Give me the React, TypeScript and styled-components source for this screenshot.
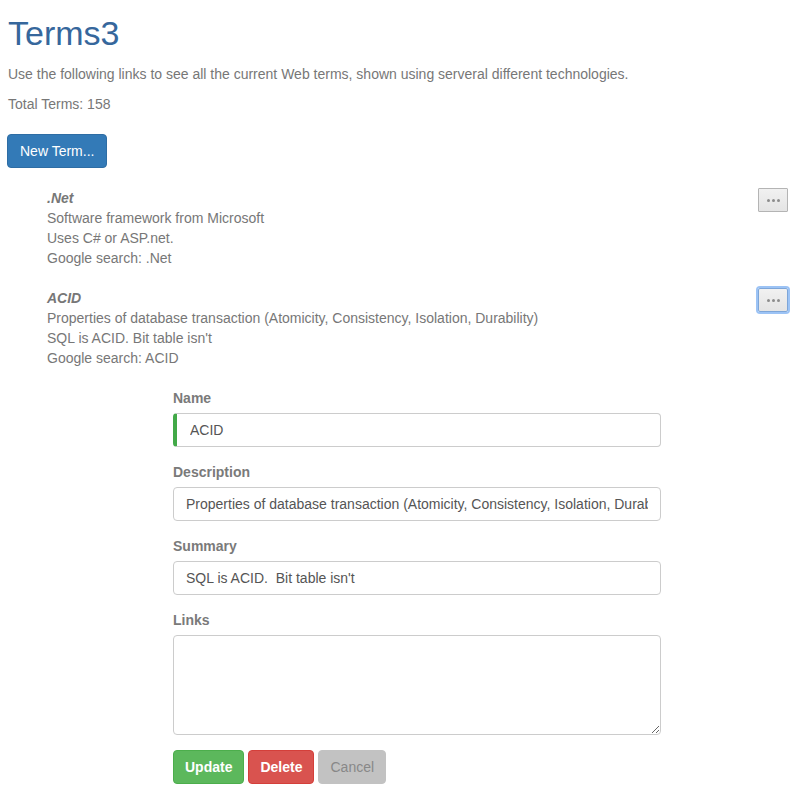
import React from 'react';
import styled, { createGlobalStyle, css } from 'styled-components';

const GlobalStyle = createGlobalStyle`
  html, body {
    margin: 0;
    padding: 0;
    background: #ffffff;
  }
  body {
    font-family: "Liberation Sans", Arial, sans-serif;
    font-size: 14px;
    line-height: 20px;
    color: #777777;
  }
  * {
    box-sizing: border-box;
  }
`

const Page = styled.div`
  padding: 0 19px 0 8px;
`

const Title = styled.h1`
  margin: 15px 0 12px;
  font-size: 34px;
  line-height: 1.1;
  font-weight: normal;
  color: #36679c;
`

const Lead = styled.p`
  margin: 0 0 10px;
`

const Count = styled.div`
  margin-bottom: 20px;
`

type Variant = 'primary' | 'success' | 'danger' | 'muted';

const variantColors: Record<Variant, { bg: string; border: string; fg: string }> = {
  primary: { bg: '#337ab7', border: '#2e6da4', fg: '#ffffff' },
  success: { bg: '#5cb85c', border: '#4cae4c', fg: '#ffffff' },
  danger: { bg: '#d9534f', border: '#d43f3a', fg: '#ffffff' },
  muted: { bg: '#c2c2c2', border: '#c2c2c2', fg: '#888888' },
};

const Button = styled.button<{ $variant: Variant }>`
  display: inline-block;
  height: 34px;
  padding: 0 11px;
  font-family: inherit;
  font-size: 14px;
  line-height: 32px;
  white-space: nowrap;
  border-radius: 4px;
  border: 1px solid ${p => variantColors[p.$variant].border};
  background: ${p => variantColors[p.$variant].bg};
  color: ${p => variantColors[p.$variant].fg};
  cursor: pointer;
  ${p => (p.$variant === 'success' || p.$variant === 'danger') && css`font-weight: bold;`}
`

const NewButton = styled(Button)`
  margin-left: -1px;
  padding: 0 12px;
`

const TermList = styled.div`
  margin-top: 20px;
  padding-left: 39px;
  display: flex;
  flex-direction: column;
  gap: 20px;
`

const TermRow = styled.div`
  display: flex;
  align-items: flex-start;
  justify-content: space-between;
`

const TermName = styled.div`
  font-weight: bold;
  font-style: italic;
`

const MoreButton = styled.button<{ $focused?: boolean }>`
  width: 30px;
  height: 24px;
  padding: 0;
  display: flex;
  align-items: center;
  justify-content: center;
  gap: 2px;
  background: linear-gradient(#f1f1f1, #e4e4e4);
  border: 1px solid #b4b4b4;
  border-radius: 1px;
  ${p => p.$focused && css`
    border-color: #7ea6d8;
    box-shadow: 0 0 0 2px #9cc3f5;
    border-radius: 2px;
  `}
`

const Dot = styled.span`
  width: 3px;
  height: 3px;
  border-radius: 50%;
  background: #8c8c8c;
`

const Form = styled.form`
  width: 488px;
  margin: 20px 0 0 165px;
`

const FormGroup = styled.div`
  margin-bottom: 15px;
`

const Label = styled.label`
  display: block;
  margin-bottom: 5px;
  font-weight: bold;
  color: #7a7a7a;
`

const Input = styled.input<{ $valid?: boolean }>`
  display: block;
  width: 100%;
  height: 34px;
  padding: 6px 12px;
  font-family: inherit;
  font-size: 14px;
  color: #555555;
  background: #ffffff;
  border: 1px solid #cccccc;
  border-radius: 4px;
  outline: none;
  ${p => p.$valid && css`
    border-left: 4px solid #42a948;
    padding-left: 13px;
  `}
`

const TextArea = styled.textarea`
  display: block;
  width: 100%;
  height: 100px;
  padding: 6px 12px;
  font-family: inherit;
  font-size: 14px;
  border: 1px solid #cccccc;
  border-radius: 4px;
  outline: none;
`

const Actions = styled.div`
  display: flex;
  gap: 4px;
`

const terms = [
  {
    name: '.Net',
    description: 'Software framework from Microsoft',
    summary: 'Uses C# or ASP.net.',
    search: 'Google search: .Net',
  },
  {
    name: 'ACID',
    description: 'Properties of database transaction (Atomicity, Consistency, Isolation, Durability)',
    summary: "SQL is ACID. Bit table isn't",
    search: 'Google search: ACID',
  },
];

export default function App() {
  return (
    <>
      <GlobalStyle />
      <Page>
        <Title>Terms3</Title>
        <Lead>Use the following links to see all the current Web terms, shown using serveral different technologies.</Lead>
        <Count>Total Terms: 158</Count>
        <NewButton $variant="primary">New Term...</NewButton>

        <TermList>
          {terms.map((term, index) => (
            <TermRow key={term.name}>
              <div>
                <TermName>{term.name}</TermName>
                <div>{term.description}</div>
                <div>{term.summary}</div>
                <div>{term.search}</div>
              </div>
              <MoreButton $focused={index === 1}>
                <Dot />
                <Dot />
                <Dot />
              </MoreButton>
            </TermRow>
          ))}
        </TermList>

        <Form onSubmit={e => e.preventDefault()}>
          <FormGroup>
            <Label>Name</Label>
            <Input $valid defaultValue="ACID" />
          </FormGroup>
          <FormGroup>
            <Label>Description</Label>
            <Input defaultValue="Properties of database transaction (Atomicity, Consistency, Isolation, Durability)" />
          </FormGroup>
          <FormGroup>
            <Label>Summary</Label>
            <Input defaultValue="SQL is ACID.  Bit table isn't" />
          </FormGroup>
          <FormGroup>
            <Label>Links</Label>
            <TextArea />
          </FormGroup>
          <Actions>
            <Button $variant="success" type="button">Update</Button>
            <Button $variant="danger" type="button">Delete</Button>
            <Button $variant="muted" type="button">Cancel</Button>
          </Actions>
        </Form>
      </Page>
    </>
  );
}
